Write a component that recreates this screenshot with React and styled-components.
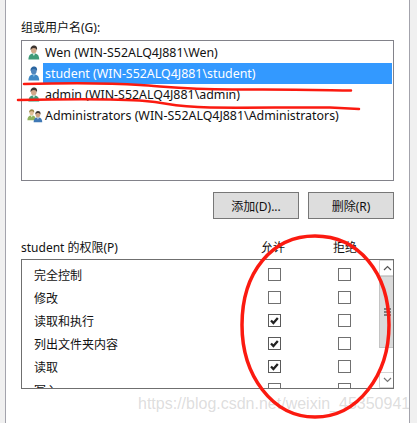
import React from 'react';
import styled, { createGlobalStyle } from 'styled-components';

const GlobalStyle = createGlobalStyle`
  html, body {
    margin: 0;
    padding: 0;
    background: #fff;
  }
`;

const Window = styled.div`
  position: relative;
  width: 417px;
  height: 423px;
  overflow: hidden;
  display: flex;
  background: #fff;
  color: #111;
  font-family: "Noto Sans", "Noto Sans CJK SC", sans-serif;
  font-size: 12px;
`;

const Gutter = styled.div`
  flex: none;
  box-sizing: border-box;
  width: ${props => props.$width}px;
  background: #f0f0f0;
  border-${props => props.$side}: 1px solid #a3a3ac;
`;

const Content = styled.main`
  flex: none;
  width: 373px;
  margin: 0 15px;
  padding-top: 20px;
  display: flex;
  flex-direction: column;
`;

const Label = styled.div`
  height: 20px;
  line-height: 16px;
`;

const UserList = styled.ul`
  list-style: none;
  margin: 0;
  height: 141px;
  box-sizing: border-box;
  padding: 1px 1px 0 0;
  border: 1px solid #82828a;
`;

const UserRow = styled.li`
  height: 21px;
  display: flex;
  align-items: center;
  padding-left: 5px;
`;

const UserIcon = styled.svg`
  flex: none;
  width: 16px;
  height: 17px;
`;

const UserName = styled.span`
  flex: 1;
  padding-left: 2px;
  line-height: 21px;
  font-size: 12.4px;
  white-space: nowrap;
  background: ${props => (props.$selected ? '#3399ff' : 'transparent')};
  color: ${props => (props.$selected ? '#fff' : '#111')};
`;

const ButtonRow = styled.div`
  display: flex;
  justify-content: flex-end;
  gap: 9px;
  margin-top: 11px;
`;

const Button = styled.button`
  width: 86px;
  height: 27px;
  padding: 0;
  background: #dddddd;
  border: 1px solid #777;
  color: #111;
  font: inherit;
`;

const PermHeader = styled.div`
  height: 40px;
  box-sizing: border-box;
  padding-top: 20px;
  display: grid;
  grid-template-columns: 218px 68px 76px 11px;
  line-height: 18px;
`;

const ColumnHead = styled.span`
  text-align: center;
`;

const PermBox = styled.div`
  height: 130px;
  box-sizing: border-box;
  border: 1px solid #6f6f6f;
  display: flex;
  overflow: hidden;
`;

const PermList = styled.div`
  flex: 1;
  padding-top: 3px;
`;

const PermRow = styled.div`
  height: 23px;
  display: grid;
  grid-template-columns: 217px 71px 69px;
  align-items: center;
`;

const PermName = styled.span`
  padding-left: 12px;
`;

const Check = styled.span`
  justify-self: center;
  width: 13px;
  height: 13px;
  box-sizing: border-box;
  border: 1px solid ${props => (props.$checked ? '#5a5a5a' : '#707070')};
  background: #fff;
  display: flex;
  align-items: center;
  justify-content: center;
`;

const Scrollbar = styled.div`
  flex: none;
  width: 17px;
  display: flex;
  flex-direction: column;
  border-right: 1px solid #b5b5b5;
  box-sizing: border-box;
`;

const ScrollButton = styled.div`
  height: 16px;
  flex: none;
  display: flex;
  align-items: center;
  justify-content: center;
  background: #fff;
  border: 1px solid #d4d4d4;
  box-sizing: border-box;
`;

const Thumb = styled.div`
  height: 72px;
  flex: none;
  box-sizing: border-box;
  background: #dadada;
  border: 1px solid #c4c4c4;
  display: flex;
  align-items: center;
  justify-content: center;
`;

const Track = styled.div`
  flex: 1;
  background: #fff;
`;

const Grip = styled.svg`
  width: 7px;
  height: 8px;
`;

const Scribbles = styled.svg`
  position: absolute;
  left: 0;
  top: 0;
  width: 417px;
  height: 423px;
  pointer-events: none;
`;

const Watermark = styled.div`
  position: absolute;
  left: 138px;
  top: 394px;
  font-family: "Liberation Sans", sans-serif;
  font-size: 16px;
  line-height: 20px;
  color: rgba(170, 170, 170, 0.4);
  white-space: nowrap;
`;

const Figure = ({ x = 0, y = 0, scale = 1, skin, hair, body, collar }) => (
  <g transform={`translate(${x} ${y}) scale(${scale})`}>
    <path d="M2.500 16c0-4 1.600-6 4-6.500h3.500c2.500.5 4 2.500 4 6.500z" fill={body} />
    <path d="M6.800 9.500l1.500 2.800 1.500-2.800z" fill={collar} />
    <ellipse cx="8.200" cy="5.800" rx="3" ry="3.600" fill={skin} />
    <path d="M4.900 6c-.6-3.400 1.500-5 3.500-5s4 1.400 3.200 5c-.6-1.500-1.800-2.300-3.300-2.300S5.500 4.500 4.900 6z" fill={hair} />
  </g>
);

const User = ({ selected }) => (
  <UserIcon viewBox="0 0 17 17">
    {selected ? (
      <Figure x={-1} skin="#4f86bd" hair="#2a65a0" body="#3f88c5" collar="#7fb6e0" />
    ) : (
      <Figure x={-1} skin="#d2a98a" hair="#3d3530" body="#3f9a78" collar="#d9efe4" />
    )}
  </UserIcon>
);

const Group = () => (
  <UserIcon viewBox="0 0 17 17">
    <Figure x={-1.500} y={1} scale={0.78} skin="#e0bf98" hair="#9a8748" body="#8fb25e" collar="#e6efd0" />
    <Figure x={5} y={3} scale={0.8} skin="#cda484" hair="#3d3530" body="#3f78b5" collar="#c9ddf0" />
  </UserIcon>
);

const CheckMark = () => (
  <svg width="11" height="11" viewBox="0 0 11 11">
    <path d="M2 5.500l2.400 2.500 4.400-5" fill="none" stroke="#222" strokeWidth="2.300" />
  </svg>
);

const users = [
  { name: 'Wen (WIN-S52ALQ4J881\\Wen)' },
  { name: 'student (WIN-S52ALQ4J881\\student)', selected: true },
  { name: 'admin (WIN-S52ALQ4J881\\admin)' },
  { name: 'Administrators (WIN-S52ALQ4J881\\Administrators)', group: true },
];

const permissions = [
  { name: '完全控制' },
  { name: '修改' },
  { name: '读取和执行', allowed: true },
  { name: '列出文件夹内容', allowed: true },
  { name: '读取', allowed: true },
  { name: '写入' },
];

const App = () => {
  return (
    <Window>
      <GlobalStyle />
      <Gutter $width={6} $side="right" />
      <Content>
        <Label>组或用户名(G):</Label>
        <UserList>
          {users.map(user => (
            <UserRow key={user.name}>
              {user.group ? <Group /> : <User selected={user.selected} />}
              <UserName $selected={user.selected}>{user.name}</UserName>
            </UserRow>
          ))}
        </UserList>
        <ButtonRow>
          <Button>添加(D)...</Button>
          <Button>删除(R)</Button>
        </ButtonRow>
        <PermHeader>
          <span>student 的权限(P)</span>
          <ColumnHead>允许</ColumnHead>
          <ColumnHead>拒绝</ColumnHead>
        </PermHeader>
        <PermBox>
          <PermList>
            {permissions.map(perm => (
              <PermRow key={perm.name}>
                <PermName>{perm.name}</PermName>
                <Check $checked={perm.allowed}>{perm.allowed && <CheckMark />}</Check>
                <Check />
              </PermRow>
            ))}
          </PermList>
          <Scrollbar>
            <ScrollButton>
              <svg width="9" height="6" viewBox="0 0 9 6">
                <path d="M1 5l3.500-3.500L8 5" fill="none" stroke="#555" strokeWidth="1.200" />
              </svg>
            </ScrollButton>
            <Thumb>
              <Grip viewBox="0 0 7 8">
                <path d="M0 1h7M0 4h7M0 7h7" stroke="#606060" strokeWidth="1.300" />
              </Grip>
            </Thumb>
            <Track />
            <ScrollButton>
              <svg width="9" height="6" viewBox="0 0 9 6">
                <path d="M1 1l3.500 3.500L8 1" fill="none" stroke="#777" strokeWidth="1.200" />
              </svg>
            </ScrollButton>
          </Scrollbar>
        </PermBox>
      </Content>
      <Gutter $width={8} $side="left" />
      <Watermark>https://blog.csdn.net/weixin_45350941</Watermark>
      <Scribbles viewBox="0 0 417 423">
        <g fill="none" stroke="#fb1a10" strokeLinecap="round">
          <path d="M24 84C70 83 110 83 140 85S190 90 240 89.500 320 90 351 90.500" strokeWidth="2.500" />
          <path d="M18 100C70 99 120 99 145 101S170 107 210 107.500 300 107 330 107.500L359 109" strokeWidth="2.500" />
          <path d="M315 236C358 236 389 272 389 325 389 375 358 417 315 417 272 417 242 375 242 325 242 272 272 236 315 236Z" strokeWidth="3.500" />
        </g>
      </Scribbles>
    </Window>
  );
};

export default App;
